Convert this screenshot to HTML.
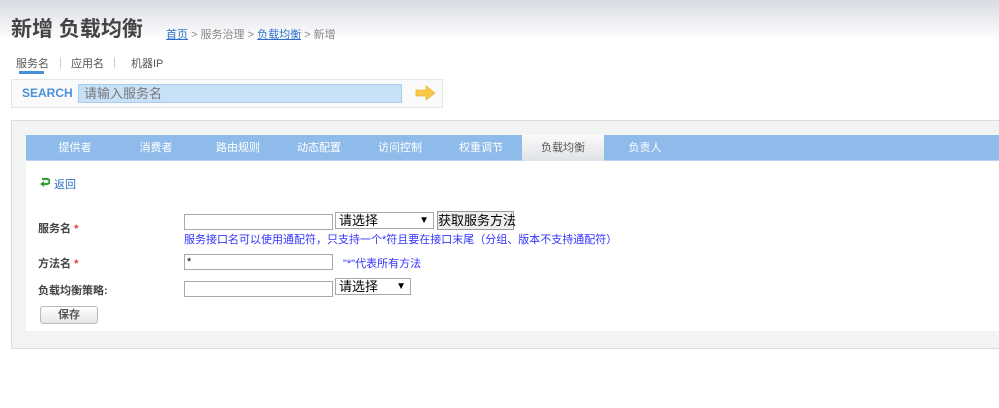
<!DOCTYPE html>
<html><head><meta charset="utf-8"><style>
*{margin:0;padding:0;box-sizing:border-box}
body{width:999px;height:408px;overflow:hidden;background:#fff;font-family:"Liberation Sans","Noto Sans CJK SC",sans-serif;font-size:12px;color:#333;position:relative}
.top{position:absolute;left:0;top:0;width:999px;height:40px;background:linear-gradient(#d8dbe2,#fff)}
.a{position:absolute;white-space:nowrap}
.lnk{color:#2e6fc9;text-decoration:underline}
input.t{position:absolute;height:16px;border:1px solid #a9a9a9;background:#fff;font-size:11px;padding-left:2px}
.sel{position:absolute;height:17px;border:1px solid #a9a9a9;background:#fff;font-size:13px;padding-left:3px;line-height:15px;color:#000}
.sel span{position:absolute;right:4px;top:0;font-size:10px}
.tab{position:absolute;top:135px;height:26px;width:82px;text-align:center;line-height:26px;color:#fff;font-size:11px}
.lbl{position:absolute;font-size:11px;color:#444;font-weight:bold}
.req{color:#e33}
.blue{color:#3333ff}
</style></head><body>
<div class="top"></div>
<div class="a" style="left:11px;top:13px;font-size:21px;font-weight:bold;color:#444">新增 负载均衡</div>
<div class="a" style="left:166px;top:26px;font-size:11px;color:#888"><span class="lnk">首页</span> &gt; 服务治理 &gt; <span class="lnk">负载均衡</span> &gt; 新增</div>
<div class="a" style="left:16px;top:55px;font-size:11px;color:#555">服务名</div>
<div class="a" style="left:19px;top:71px;width:25px;height:3px;background:#4a90d9"></div>
<div class="a" style="left:59px;top:55px;color:#ccc">|</div>
<div class="a" style="left:71px;top:55px;color:#555;font-size:11px">应用名</div>
<div class="a" style="left:113px;top:55px;color:#ccc">|</div>
<div class="a" style="left:131px;top:55px;color:#555;font-size:11px">机器IP</div>
<div class="a" style="left:11px;top:79px;width:432px;height:29px;background:#fafafa;border:1px solid #e6e6e6"></div>
<div class="a" style="left:22px;top:86px;font-size:12px;font-weight:bold;color:#4a90d9">SEARCH</div>
<div class="a" style="left:78px;top:84px;width:324px;height:19px;background:#c8e1f7;border:1px solid #a9cdec;color:#777;font-size:13px;line-height:17px;padding-left:5px">请输入服务名</div>
<svg class="a" style="left:415px;top:85px" width="21" height="16" viewBox="0 0 21 16"><path d="M1 5h10V1l9 7-9 7v-4H1z" fill="#f7c94a" stroke="#e9b73a" stroke-width="0.8"/></svg>
<div class="a" style="left:11px;top:120px;width:990px;height:229px;background:#f2f3f3;border:1px solid #dcdcdc"></div>
<div class="a" style="left:26px;top:135px;width:975px;height:196px;background:#fff"></div>
<div class="a" style="left:26px;top:135px;width:975px;height:26px;background:#8fbbeb;border-bottom:1px solid #b8d4f2"></div>
<div class="tab" style="left:34px">提供者</div>
<div class="tab" style="left:115px">消费者</div>
<div class="tab" style="left:197px">路由规则</div>
<div class="tab" style="left:278px">动态配置</div>
<div class="tab" style="left:359px">访问控制</div>
<div class="tab" style="left:440px">权重调节</div>
<div class="tab" style="left:522px;background:linear-gradient(#fafafa,#dfe2e6);color:#555">负载均衡</div>
<div class="tab" style="left:604px">负责人</div>
<svg class="a" style="left:40px;top:177px" width="10" height="10" viewBox="0 0 10 10"><path d="M2 2h5a2.5 2.5 0 0 1 0 5H3" fill="none" stroke="#3a9d3a" stroke-width="2.2"/><path d="M0 7l4-3v6z" fill="#3a9d3a"/></svg>
<div class="a lnk" style="left:54px;top:176px;text-decoration:none;font-size:11px">返回</div>
<div class="lbl" style="left:38px;top:220px">服务名 <span class="req">*</span></div>
<input class="t" style="left:184px;top:214px;width:149px">
<div class="sel" style="left:335px;top:212px;width:99px">请选择<span>▼</span></div>
<div class="a" style="left:437px;top:211px;height:19px;width:77px;border:1px solid #999;background:#eee;font-size:13px;line-height:17px;text-align:center;color:#000">获取服务方法</div>
<div class="a blue" style="left:184px;top:231px;font-size:11px">服务接口名可以使用通配符，只支持一个*符且要在接口末尾（分组、版本不支持通配符）</div>
<div class="lbl" style="left:38px;top:255px">方法名 <span class="req">*</span></div>
<input class="t" style="left:184px;top:254px;width:149px" value="*">
<div class="a blue" style="left:343px;top:255px;font-size:11px">"*"代表所有方法</div>
<div class="lbl" style="left:38px;top:282px">负载均衡策略:</div>
<input class="t" style="left:184px;top:281px;width:149px">
<div class="sel" style="left:335px;top:278px;width:76px">请选择<span>▼</span></div>
<div class="a" style="left:40px;top:306px;width:58px;height:18px;border:1px solid #bbb;border-radius:3px;background:linear-gradient(#fff,#e6e6e6);text-align:center;line-height:16px;font-weight:bold;color:#555;font-size:11px">保存</div>
</body></html>
